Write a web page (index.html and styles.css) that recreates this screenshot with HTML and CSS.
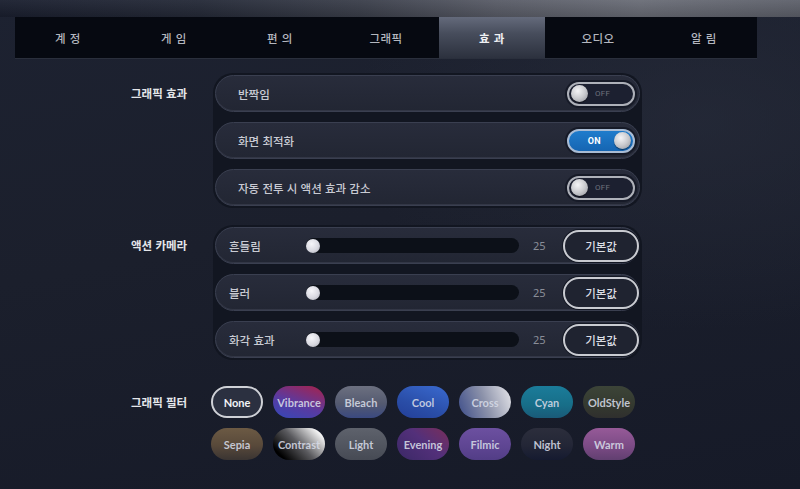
FILE: index.html
```html
<!DOCTYPE html>
<html lang="ko">
<head>
<meta charset="utf-8">
<title>효과 설정</title>
<link rel="stylesheet" href="styles.css">
</head>
<body>
<div class="topstrip"></div>
<nav class="tabs">
  <div class="tab">계 정</div>
  <div class="tab">게 임</div>
  <div class="tab">편 의</div>
  <div class="tab">그래픽</div>
  <div class="tab active">효 과</div>
  <div class="tab">오디오</div>
  <div class="tab">알 림</div>
</nav>
<main class="content">
  <section class="section s-effects">
    <div class="label">그래픽 효과</div>
    <div class="group">
      <div class="row toggle-row">
        <span class="row-text">반짝임</span>
        <div class="toggle"><span class="knob"></span><span class="tgl-text">OFF</span></div>
      </div>
      <div class="row toggle-row">
        <span class="row-text">화면 최적화</span>
        <div class="toggle on"><span class="tgl-text">ON</span><span class="knob"></span></div>
      </div>
      <div class="row toggle-row">
        <span class="row-text">자동 전투 시 액션 효과 감소</span>
        <div class="toggle"><span class="knob"></span><span class="tgl-text">OFF</span></div>
      </div>
    </div>
  </section>

  <section class="section s-camera">
    <div class="label">액션 카메라</div>
    <div class="group">
      <div class="row slider-row">
        <span class="row-text slider-label">흔들림</span>
        <div class="track"><span class="thumb"></span></div>
        <span class="value">25</span>
        <button class="reset">기본값</button>
      </div>
      <div class="row slider-row">
        <span class="row-text slider-label">블러</span>
        <div class="track"><span class="thumb"></span></div>
        <span class="value">25</span>
        <button class="reset">기본값</button>
      </div>
      <div class="row slider-row">
        <span class="row-text slider-label">화각 효과</span>
        <div class="track"><span class="thumb"></span></div>
        <span class="value">25</span>
        <button class="reset">기본값</button>
      </div>
    </div>
  </section>

  <section class="section s-filters">
    <div class="label filter-label">그래픽 필터</div>
    <div class="filters">
      <div class="chip f-none">None</div>
      <div class="chip f-vibrance">Vibrance</div>
      <div class="chip f-bleach">Bleach</div>
      <div class="chip f-cool">Cool</div>
      <div class="chip f-cross">Cross</div>
      <div class="chip f-cyan">Cyan</div>
      <div class="chip f-oldstyle">OldStyle</div>
      <div class="chip f-sepia">Sepia</div>
      <div class="chip f-contrast">Contrast</div>
      <div class="chip f-light">Light</div>
      <div class="chip f-evening">Evening</div>
      <div class="chip f-filmic">Filmic</div>
      <div class="chip f-night">Night</div>
      <div class="chip f-warm">Warm</div>
    </div>
  </section>
</main>
</body>
</html>
```

FILE: styles.css
```css
* { box-sizing: border-box; }

html, body {
  margin: 0;
  padding: 0;
  width: 800px;
  height: 489px;
  overflow: hidden;
}

body {
  font-family: "Noto Sans CJK KR", "Noto Sans", sans-serif;
  background:
    radial-gradient(ellipse 500px 300px at 700px 120px, rgba(40, 45, 60, 0.6), rgba(40, 45, 60, 0) 70%),
    linear-gradient(170deg, #1d2231 0%, #1b1f2c 45%, #161a28 100%);
  color: #c8cad2;
}

.topstrip {
  height: 17px;
  background:
    linear-gradient(180deg, rgba(255,255,255,0.04), rgba(0,0,0,0.15)),
    linear-gradient(90deg, #1b2030 0%, #262b39 25%, #3c404c 45%, #5a5d68 62%, #6b6e78 80%, #5f626c 100%);
}

.tabs {
  display: flex;
  margin-left: 15px;
  width: 742px;
  height: 41px;
  background: #060911;
  box-shadow: 0 1px 0 #2a2f3c;
}

.tab {
  flex: 1;
  display: flex;
  align-items: center;
  justify-content: center;
  font-size: 11.5px;
  font-weight: 500;
  letter-spacing: 0.5px;
  color: #b4b7bf;
  white-space: pre;
}

.tab.active {
  background: linear-gradient(180deg, #646a7b 0%, #474d5c 40%, #2c313e 100%);
  color: #f0f1f4;
  font-weight: 700;
}

.content {
  padding-left: 131px;
}

.section {
  display: flex;
  align-items: flex-start;
}

.s-effects { margin-top: 15px; }
.s-camera { margin-top: 17px; }
.s-filters { margin-top: 26px; }

.label {
  width: 82px;
  height: 37px;
  line-height: 37px;
  margin-top: 2px;
  font-size: 11.5px;
  font-weight: 700;
  color: #e4e6ea;
}

.filter-label {
  width: 80px;
  height: 32px;
  line-height: 32px;
  margin-top: 0;
}

.group {
  width: 429px;
  padding: 2px;
  display: flex;
  flex-direction: column;
  gap: 10px;
  background: #121621;
  border-radius: 20px;
}

.row {
  height: 37px;
  width: 425px;
  display: flex;
  align-items: center;
  border: 1px solid #3a3f50;
  border-radius: 19px;
  background: linear-gradient(180deg, #282c3b 0%, #222633 100%);
  box-shadow: inset 0 -1px 0 rgba(80, 86, 104, 0.35);
}

.row-text {
  font-size: 11.5px;
  font-weight: 500;
  color: #c9cbd3;
}

.toggle-row {
  padding-left: 22px;
  padding-right: 4px;
  justify-content: space-between;
}

.toggle {
  width: 68px;
  height: 24px;
  border: 2px solid #aeb1b9;
  border-radius: 12px;
  background: #1c2030;
  box-shadow: 0 0 0 2px #161a27;
  display: flex;
  align-items: center;
  padding: 0 2px;
  gap: 7px;
}

.knob {
  width: 17px;
  height: 17px;
  border-radius: 50%;
  background: radial-gradient(circle at 40% 35%, #f4f4f6 0%, #c9cace 50%, #8e9098 100%);
  box-shadow: 0 1px 1px rgba(0,0,0,0.5);
}

.tgl-text {
  font-family: Roboto, "Noto Sans", sans-serif;
  font-size: 8px;
  color: #6d717d;
  letter-spacing: 0.3px;
}

.toggle.on {
  background: linear-gradient(180deg, #1f7ccc 0%, #1565b2 100%);
  border-color: #a9bcd4;
  justify-content: flex-end;
  gap: 13px;
}

.toggle.on .tgl-text {
  color: #ffffff;
  font-weight: 700;
  font-size: 9px;
}

.slider-row {
  padding-left: 13px;
  padding-right: 0;
}

.slider-label {
  width: 77px;
  flex: none;
}

.track {
  width: 213px;
  height: 15px;
  flex: none;
  border-radius: 8px;
  background: #0c1018;
  display: flex;
  align-items: center;
}

.thumb {
  width: 14px;
  height: 14px;
  border-radius: 50%;
  background: radial-gradient(circle at 40% 35%, #f6f6fa 0%, #d9d9e1 55%, #a9aab4 100%);
}

.value {
  width: 13px;
  margin-left: 14px;
  font-family: "Noto Sans", sans-serif;
  font-size: 11px;
  color: #8a8e98;
}

.reset {
  margin-left: 17px;
  width: 76px;
  height: 32px;
  border: 2px solid #c9cbd1;
  border-radius: 16px;
  background: #1f2330;
  color: #dcdee4;
  font-family: "Noto Sans CJK KR", sans-serif;
  font-size: 11.5px;
  font-weight: 500;
  padding: 0;
  box-shadow: 0 0 0 1px #141824;
}

.filters {
  display: grid;
  grid-template-columns: repeat(7, 52px);
  grid-auto-rows: 32px;
  column-gap: 10px;
  row-gap: 10px;
}

.chip {
  border-radius: 16px;
  display: flex;
  align-items: center;
  justify-content: center;
  font-family: Lato, "Noto Sans", sans-serif;
  font-weight: 700;
  font-size: 11px;
  color: rgba(214, 218, 230, 0.88);
  white-space: nowrap;
  overflow: hidden;
}

.f-none {
  background: #2b3040;
  border: 2px solid #cfd1d7;
  color: #f2f3f6;
}
.f-vibrance { background: linear-gradient(20deg, #3448b8 0%, #5a3aa0 45%, #a8224a 100%); }
.f-bleach { background: linear-gradient(180deg, #6c7080 0%, #545a70 55%, #3a4980 100%); }
.f-cool { background: linear-gradient(200deg, #3a6ad0 0%, #2a4ea8 60%, #233f98 100%); }
.f-cross { background: linear-gradient(70deg, #3e4e8a 0%, #8c92aa 50%, #e6e6ea 100%); }
.f-cyan { background: linear-gradient(180deg, #1b7c9a 0%, #176e88 60%, #1a5a78 100%); }
.f-oldstyle { background: linear-gradient(180deg, #3c4438 0%, #34392f 60%, #2f2f2e 100%); }
.f-sepia { background: linear-gradient(180deg, #6c5a44 0%, #58493a 55%, #3a3432 100%); }
.f-contrast { background: linear-gradient(45deg, #000000 15%, #5a5a5e 50%, #ffffff 90%); }
.f-light { background: linear-gradient(180deg, #5e626c 0%, #50545e 60%, #464a54 100%); }
.f-evening { background: linear-gradient(220deg, #7a2e5a 0%, #53307a 45%, #3a2866 100%); }
.f-filmic { background: linear-gradient(180deg, #6c50a0 0%, #5e4592 60%, #523d86 100%); }
.f-night { background: linear-gradient(180deg, #2c2e3c 0%, #232636 55%, #151a30 100%); }
.f-warm { background: linear-gradient(180deg, #965a98 0%, #7a4a84 60%, #613f70 100%); }
```
